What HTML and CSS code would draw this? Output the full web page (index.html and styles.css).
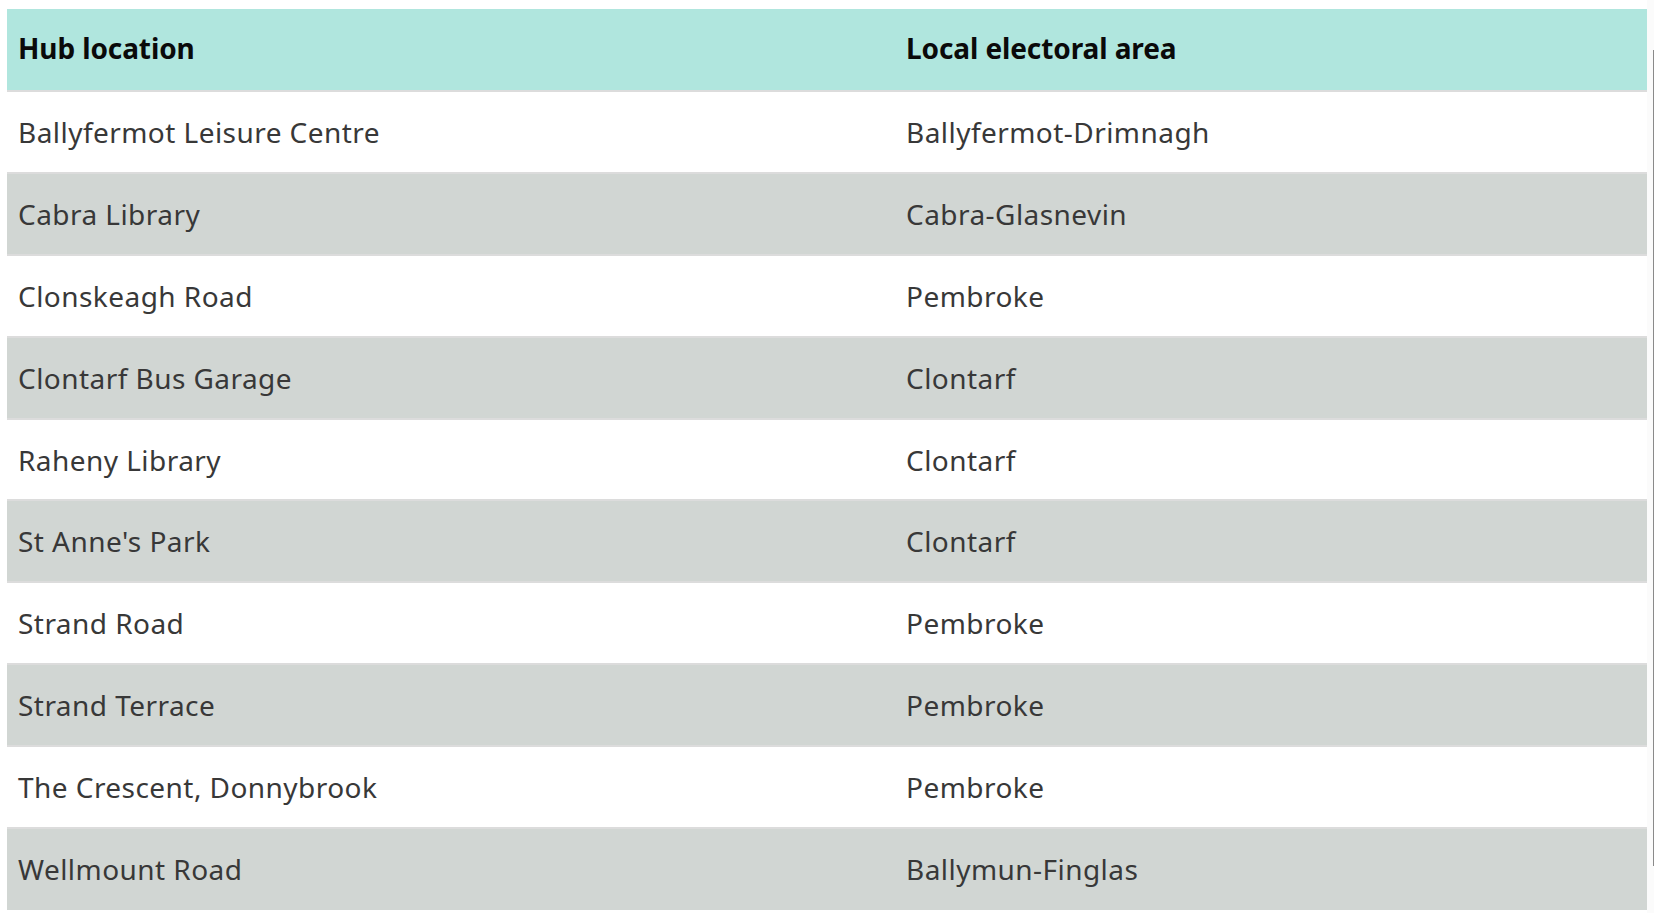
FILE: index.html
```html
<!DOCTYPE html>
<html lang="en">
<head>
<meta charset="utf-8">
<title>Hub locations</title>
<link rel="stylesheet" href="styles.css">
</head>
<body>
<div class="page">
  <table class="hubs">
    <thead>
      <tr><th class="col-a">Hub location</th><th>Local electoral area</th></tr>
    </thead>
    <tbody>
      <tr><td>Ballyfermot Leisure Centre</td><td>Ballyfermot-Drimnagh</td></tr>
      <tr><td>Cabra Library</td><td>Cabra-Glasnevin</td></tr>
      <tr><td>Clonskeagh Road</td><td>Pembroke</td></tr>
      <tr><td>Clontarf Bus Garage</td><td>Clontarf</td></tr>
      <tr><td>Raheny Library</td><td>Clontarf</td></tr>
      <tr><td>St Anne's Park</td><td>Clontarf</td></tr>
      <tr><td>Strand Road</td><td>Pembroke</td></tr>
      <tr><td>Strand Terrace</td><td>Pembroke</td></tr>
      <tr><td>The Crescent, Donnybrook</td><td>Pembroke</td></tr>
      <tr><td>Wellmount Road</td><td>Ballymun-Finglas</td></tr>
    </tbody>
  </table>
  <div class="scroll"><div class="thumb"></div></div>
</div>
</body>
</html>
```
FILE: styles.css
```css
html, body {
  margin: 0;
  padding: 0;
  background: #ffffff;
  overflow: hidden;
}
.page {
  display: flex;
  align-items: flex-start;
  padding: 9px 0 0 7px;
  height: 913px;
  box-sizing: border-box;
}
.hubs {
  width: 1640px;
  flex: none;
  border-collapse: collapse;
  font-family: "Noto Sans", "Open Sans", sans-serif;
  font-size: 28px;
  table-layout: fixed;
}
.hubs th {
  background: #b0e6de;
  color: #0a0a0a;
  font-weight: 700;
  text-align: left;
  height: 82px;
  padding: 0 11px 4px;
  box-sizing: border-box;
  letter-spacing: -0.1px;
}
.hubs .col-a {
  width: 888px;
}
.hubs td {
  color: #383838;
  height: 81.9px;
  padding: 0 11px;
  box-sizing: border-box;
  border-top: 2px solid #dcdcdc;
  font-weight: 400;
  letter-spacing: 0.45px;
}
.hubs tbody tr:nth-child(even) td {
  background: #d1d6d3;
}
.scroll {
  flex: none;
  width: 7px;
  height: 913px;
  margin-top: -9px;
  background: #fbfbfb;
  position: relative;
}
.thumb {
  position: absolute;
  right: 0;
  top: 50px;
  height: 816px;
  width: 1px;
  background: #8a8a8a;
}
```
